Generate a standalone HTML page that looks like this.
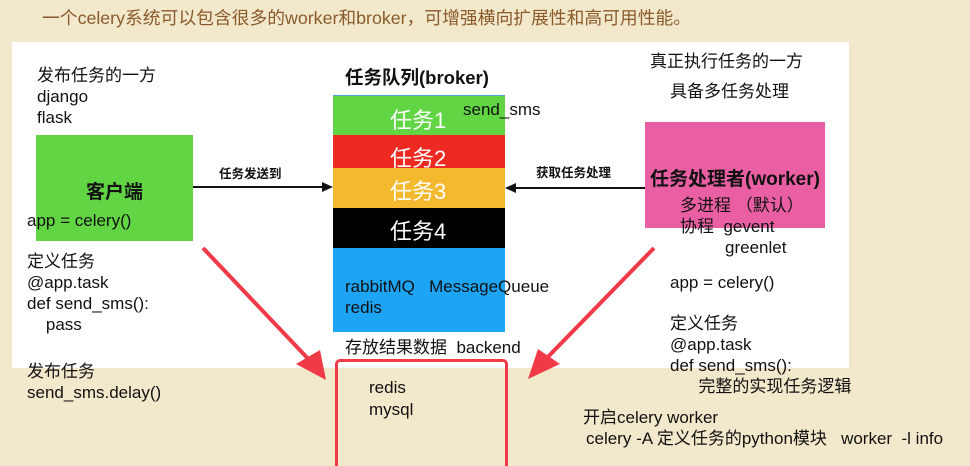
<!DOCTYPE html>
<html><head><meta charset="utf-8"><style>
html,body{margin:0;width:970px;height:466px;overflow:hidden;}
body{background:#f2e8cb;position:relative;font-family:"Liberation Sans","Noto Sans CJK SC",sans-serif;color:#111;}
div{position:absolute;white-space:nowrap;}
.t{font-size:17px;line-height:20px;}
</style></head><body>
<div style="left:42px;top:4px;font-size:17.8px;color:#8a5a2b;">一个celery系统可以包含很多的worker和broker，可增强横向扩展性和高可用性能。</div>
<div style="left:12px;top:42px;width:837px;height:326px;background:#fff;"></div>

<div class="t" style="left:37px;top:65px;line-height:21px;">发布任务的一方<br>django<br>flask</div>
<div style="left:36px;top:135px;width:157px;height:106px;background:#62d544;"></div>
<div style="left:86px;top:177px;font-size:19px;font-weight:bold;">客户端</div>
<div class="t" style="left:27px;top:211px;">app = celery()</div>
<div class="t" style="left:27px;top:251px;line-height:21px;">定义任务<br>@app.task<br>def send_sms():<br>&nbsp;&nbsp;&nbsp;&nbsp;pass</div>
<div class="t" style="left:27px;top:361px;line-height:21px;">发布任务<br>send_sms.delay()</div>

<div style="left:345px;top:64px;font-size:18.5px;font-weight:bold;">任务队列(broker)</div>
<div style="left:333px;top:95px;width:172px;height:40px;background:#62d544;border-top:1px solid #4aa3e0;"></div>
<div style="left:333px;top:135px;width:172px;height:33px;background:#ec2a22;"></div>
<div style="left:333px;top:168px;width:172px;height:40px;background:#f4b92e;"></div>
<div style="left:333px;top:208px;width:172px;height:40px;background:#000;"></div>
<div style="left:333px;top:248px;width:172px;height:84px;background:#1da4f5;"></div>
<div style="left:390px;top:103px;font-size:22px;color:#fff;">任务1</div>
<div style="left:390px;top:141px;font-size:22px;color:#fff;">任务2</div>
<div style="left:390px;top:174px;font-size:22px;color:#fff;">任务3</div>
<div style="left:390px;top:214px;font-size:22px;color:#fff;">任务4</div>
<div class="t" style="left:463px;top:100px;">send_sms</div>
<div class="t" style="left:345px;top:276px;line-height:21px;">rabbitMQ&nbsp;&nbsp;&nbsp;MessageQueue<br>redis</div>
<div class="t" style="left:345px;top:338px;">存放结果数据&nbsp;&nbsp;backend</div>
<div style="left:335px;top:359px;width:167px;height:120px;border:3px solid #f03a48;border-radius:5px;"></div>
<div class="t" style="left:369px;top:377px;line-height:22px;">redis<br>mysql</div>

<div style="left:219px;top:163px;font-size:12.5px;font-weight:bold;">任务发送到</div>
<div style="left:536px;top:162px;font-size:12.5px;font-weight:bold;">获取任务处理</div>
<svg style="position:absolute;left:0;top:0" width="970" height="466">
<line x1="193" y1="187" x2="324" y2="187" stroke="#111" stroke-width="2"/>
<polygon points="333,187 322,182 322,192" fill="#111"/>
<line x1="645" y1="188" x2="514" y2="188" stroke="#111" stroke-width="2"/>
<polygon points="505,188 516,183 516,193" fill="#111"/>
<line x1="203" y1="248" x2="314" y2="365" stroke="#f03a48" stroke-width="4"/>
<polygon points="326,380 296,364 320,350" fill="#f03a48"/>
<line x1="654" y1="248" x2="540" y2="365" stroke="#f03a48" stroke-width="4"/>
<polygon points="528,379 538,349 560,364" fill="#f03a48"/>
</svg>

<div class="t" style="left:650px;top:52px;">真正执行任务的一方</div>
<div class="t" style="left:670px;top:82px;">具备多任务处理</div>
<div style="left:645px;top:122px;width:180px;height:106px;background:#ea5fa4;"></div>
<div style="left:650px;top:164px;font-size:19px;font-weight:bold;">任务处理者(worker)</div>
<div class="t" style="left:680px;top:196px;">多进程 （默认）</div>
<div class="t" style="left:680px;top:217px;">协程&nbsp;&nbsp;gevent</div>
<div class="t" style="left:725px;top:238px;">greenlet</div>
<div class="t" style="left:670px;top:273px;">app = celery()</div>
<div class="t" style="left:670px;top:313px;line-height:21px;">定义任务<br>@app.task<br>def send_sms():<br>&nbsp;&nbsp;&nbsp;&nbsp;&nbsp;&nbsp;完整的实现任务逻辑</div>
<div class="t" style="left:583px;top:408px;">开启celery worker</div>
<div class="t" style="left:586px;top:429px;">celery -A 定义任务的python模块&nbsp;&nbsp;&nbsp;worker&nbsp;&nbsp;-l info</div>
</body></html>
